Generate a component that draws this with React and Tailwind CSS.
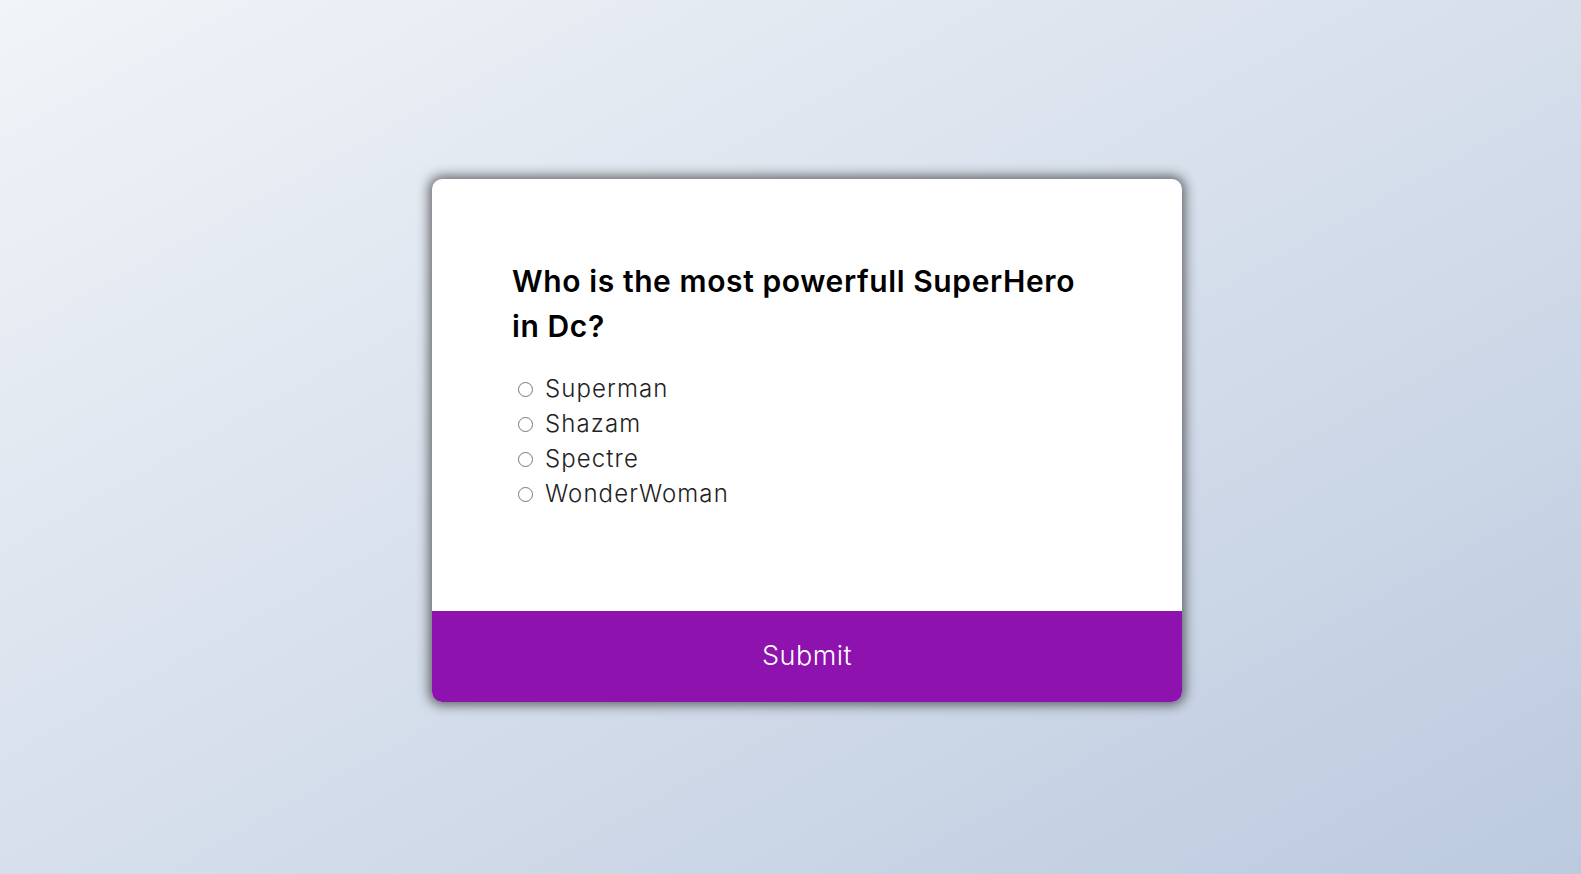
import React, { useState } from "react";

const answers = ["Superman", "Shazam", "Spectre", "WonderWoman"];

export default function App() {
  const [picked, setPicked] = useState(null);

  return (
    <div className="min-h-screen w-full flex items-center justify-center pl-[33px] pt-[6px] bg-[linear-gradient(to_bottom_right,#f1f4f8,#bccadf)] font-['Inter',sans-serif]">
      <div className="w-[750px] bg-white rounded-[10px] overflow-hidden shadow-[0_0_12px_3px_rgba(30,30,30,0.65)]">
        <div className="px-[80px] pt-[80px] pb-[99px]">
          <h2 className="text-[30px] leading-[45px] font-semibold text-black tracking-[0.6px]">
            Who is the most powerfull SuperHero<br />in Dc?
          </h2>
          <ul className="mt-[23px] pl-[6px]">
            {answers.map((a) => (
              <li key={a} className="flex items-center h-[35px]">
                <input
                  type="radio"
                  name="answer"
                  id={a}
                  checked={picked === a}
                  onChange={() => setPicked(a)}
                  className="w-[15px] h-[15px] m-0 accent-[#8e12ae]"
                />
                <label htmlFor={a} className="ml-[12px] text-[24px] font-light text-[#222] tracking-[1.1px] cursor-pointer">
                  {a}
                </label>
              </li>
            ))}
          </ul>
        </div>
        <button className="w-full h-[91px] bg-[#8e12ae] text-white text-[27px] font-light tracking-[0.5px] cursor-pointer">
          Submit
        </button>
      </div>
    </div>
  );
}
